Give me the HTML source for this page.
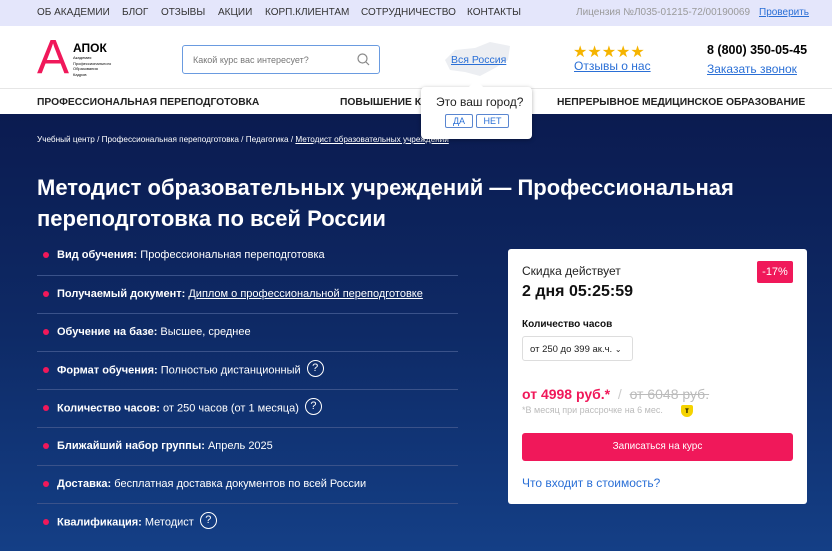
<!DOCTYPE html>
<html><head><meta charset="utf-8">
<style>
*{margin:0;padding:0;box-sizing:border-box}
body{width:832px;height:551px;overflow:hidden;font-family:"Liberation Sans",sans-serif;background:#fff;position:relative}
.a{position:absolute}
.top{left:0;top:0;width:832px;height:26px;background:#e4e6fb;font-size:10px;color:#333}
.top span{position:absolute;top:7px;white-space:nowrap}
.hdr{top:26px;left:0;width:832px;height:62px;background:#fff}
.nav{top:88px;left:0;width:832px;height:26px;background:#fff;border-top:1px solid #e6e6e6;font-size:10.3px;font-weight:bold;color:#222}
.nav span{position:absolute;top:8px;white-space:nowrap}
.main{top:114px;left:0;width:832px;height:437px;background:linear-gradient(180deg,#0b1b50 0%,#0e2a66 50%,#143f86 100%)}
.li{position:absolute;left:37px;width:421px;height:38px;color:#fff;font-size:11px}
.li .d{position:absolute;left:6px;top:16px;width:6px;height:6px;border-radius:50%;background:#f0185a}
.li .t{position:absolute;left:20px;top:13px;white-space:nowrap}
.li .q{display:inline-block;width:17px;height:17px;border:1.5px solid #fff;border-radius:50%;text-align:center;font-size:11px;line-height:14px;margin-left:6px;vertical-align:middle;margin-top:-4px}
.sep{position:absolute;left:37px;width:421px;height:1px;background:#3a528a}
.card{left:508px;top:249px;width:299px;height:255px;background:#fff;border-radius:3px}
u{text-decoration:underline}
</style></head><body>
<div class="a top">
<span style="left:37px">ОБ АКАДЕМИИ</span><span style="left:122px">БЛОГ</span><span style="left:161px">ОТЗЫВЫ</span><span style="left:218px">АКЦИИ</span><span style="left:265px">КОРП.КЛИЕНТАМ</span><span style="left:361px">СОТРУДНИЧЕСТВО</span><span style="left:467px">КОНТАКТЫ</span>
<span style="left:576px;color:#999">Лицензия №Л035-01215-72/00190069</span><span style="left:759px;color:#2a6fd6"><u>Проверить</u></span>
</div>
<div class="a hdr">
<div class="a" style="left:37px;top:8px;font-size:48px;color:#f0185a;line-height:48px">A</div>
<div class="a" style="left:73px;top:15px;font-size:12px;font-weight:bold">АПОК</div>
<div class="a" style="left:73px;top:29px;font-size:4px;line-height:5.5px">Академия<br>Профессионального<br>Образования<br>Кадров</div>
<div class="a" style="left:182px;top:19px;width:198px;height:29px;border:1.5px solid #6a9be0;border-radius:3px;font-size:9px;color:#777;padding:9px 10px">Какой курс вас интересует?
<svg class="a" style="right:9px;top:7px" width="13" height="13" viewBox="0 0 13 13"><circle cx="5.5" cy="5.5" r="4.5" fill="none" stroke="#888" stroke-width="1.2"/><line x1="9" y1="9" x2="12" y2="12" stroke="#888" stroke-width="1.2"/></svg></div>
<svg class="a" style="left:440px;top:14px" width="75" height="38"><path d="M5 20 L15 10 L35 8 L50 2 L70 6 L68 20 L55 28 L40 36 L25 32 L10 30 Z" fill="#eceef2"/></svg>
<div class="a" style="left:451px;top:28px;font-size:10.5px;color:#2a6fd6"><u>Вся Россия</u></div>
<div class="a" style="left:573px;top:16px;font-size:16px;color:#f5b400;letter-spacing:0px">★★★★★</div>
<div class="a" style="left:574px;top:33px;font-size:12px;color:#2a6fd6"><u>Отзывы о нас</u></div>
<div class="a" style="left:707px;top:17px;font-size:12.5px;font-weight:bold">8 (800) 350-05-45</div>
<div class="a" style="left:707px;top:36px;font-size:12px;color:#2a6fd6"><u>Заказать звонок</u></div>
</div>
<div class="a nav"><span style="left:37px">ПРОФЕССИОНАЛЬНАЯ ПЕРЕПОДГОТОВКА</span><span style="left:340px">ПОВЫШЕНИЕ КВАЛИФИКАЦИИ</span><span style="left:557px">НЕПРЕРЫВНОЕ МЕДИЦИНСКОЕ ОБРАЗОВАНИЕ</span></div>
<div class="a main">
<div class="a" style="left:37px;top:21px;font-size:8.2px;color:#fff;white-space:nowrap">Учебный центр / Профессиональная переподготовка / Педагогика / <u>Методист образовательных учреждений</u></div>
<div class="a" style="left:37px;top:58px;width:760px;font-size:22px;font-weight:bold;color:#fff;line-height:31px">Методист образовательных учреждений — Профессиональная переподготовка по всей России</div>
</div>
<div class="li" style="top:236px"><i class="d"></i><div class="t"><b>Вид обучения:</b> Профессиональная переподготовка</div></div>
<div class="sep" style="top:275px"></div>
<div class="li" style="top:275px"><i class="d"></i><div class="t"><b>Получаемый документ:</b> <u>Диплом о профессиональной переподготовке</u></div></div>
<div class="sep" style="top:313px"></div>
<div class="li" style="top:313px"><i class="d"></i><div class="t"><b>Обучение на базе:</b> Высшее, среднее</div></div>
<div class="sep" style="top:351px"></div>
<div class="li" style="top:351px"><i class="d"></i><div class="t"><b>Формат обучения:</b> Полностью дистанционный<span class="q">?</span></div></div>
<div class="sep" style="top:389px"></div>
<div class="li" style="top:389px"><i class="d"></i><div class="t"><b>Количество часов:</b> от 250 часов (от 1 месяца)<span class="q">?</span></div></div>
<div class="sep" style="top:427px"></div>
<div class="li" style="top:427px"><i class="d"></i><div class="t"><b>Ближайший набор группы:</b> Апрель 2025</div></div>
<div class="sep" style="top:465px"></div>
<div class="li" style="top:465px"><i class="d"></i><div class="t"><b>Доставка:</b> бесплатная доставка документов по всей России</div></div>
<div class="sep" style="top:503px"></div>
<div class="li" style="top:503px"><i class="d"></i><div class="t"><b>Квалификация:</b> Методист<span class="q">?</span></div></div>
<div class="a card">
<div class="a" style="left:14px;top:15px;font-size:12px;color:#222">Скидка действует</div>
<div class="a" style="left:14px;top:34px;font-size:16px;font-weight:bold;color:#111">2 дня 05:25:59</div>
<div class="a" style="left:249px;top:12px;width:36px;height:22px;background:#f0185a;color:#fff;font-size:11px;text-align:center;line-height:22px;border-radius:2px">-17%</div>
<div class="a" style="left:14px;top:70px;font-size:10px;font-weight:bold;color:#111">Количество часов</div>
<div class="a" style="left:14px;top:87px;width:111px;height:25px;border:1px solid #ddd;border-radius:3px;font-size:9.5px;color:#222;padding:7px 7px;white-space:nowrap">от 250 до 399 ак.ч. <span style="font-size:8px">&#8964;</span></div>
<div class="a" style="left:14px;top:137px;font-size:14px;font-weight:bold;color:#f0185a;white-space:nowrap">от 4998 руб.* <span style="color:#ccc;font-weight:normal">&nbsp;/&nbsp;</span> <s style="color:#bbb;font-weight:normal">от 6048 руб.</s></div>
<div class="a" style="left:14px;top:156px;font-size:9px;color:#bbb">*В месяц при рассрочке на 6 мес.</div>
<div class="a" style="left:173px;top:156px;width:12px;height:12px;background:#f5d300;border-radius:2px 2px 6px 6px;font-size:8px;font-weight:bold;text-align:center;line-height:12px">т</div>
<div class="a" style="left:14px;top:184px;width:271px;height:28px;background:#f0185a;border-radius:3px;color:#fff;font-size:10px;text-align:center;line-height:28px">Записаться на курс</div>
<div class="a" style="left:14px;top:227px;font-size:12px;color:#2a6fd6">Что входит в стоимость?</div>
</div>
<div class="a" style="left:421px;top:87px;width:111px;height:52px;background:#fff;border-radius:4px;box-shadow:0 1px 4px rgba(0,0,0,.3)">
<div class="a" style="left:50px;top:-5px;width:10px;height:10px;background:#fff;transform:rotate(45deg)"></div>
<div class="a" style="left:15px;top:8px;font-size:12px;color:#222">Это ваш город?</div>
<div class="a" style="left:24px;top:27px;width:28px;height:14px;border:1px solid #5a86d0;border-radius:2px;font-size:9px;color:#2a6fd6;text-align:center;line-height:12px">ДА</div>
<div class="a" style="left:55px;top:27px;width:33px;height:14px;border:1px solid #5a86d0;border-radius:2px;font-size:9px;color:#2a6fd6;text-align:center;line-height:12px">НЕТ</div>
</div>
</body></html>
